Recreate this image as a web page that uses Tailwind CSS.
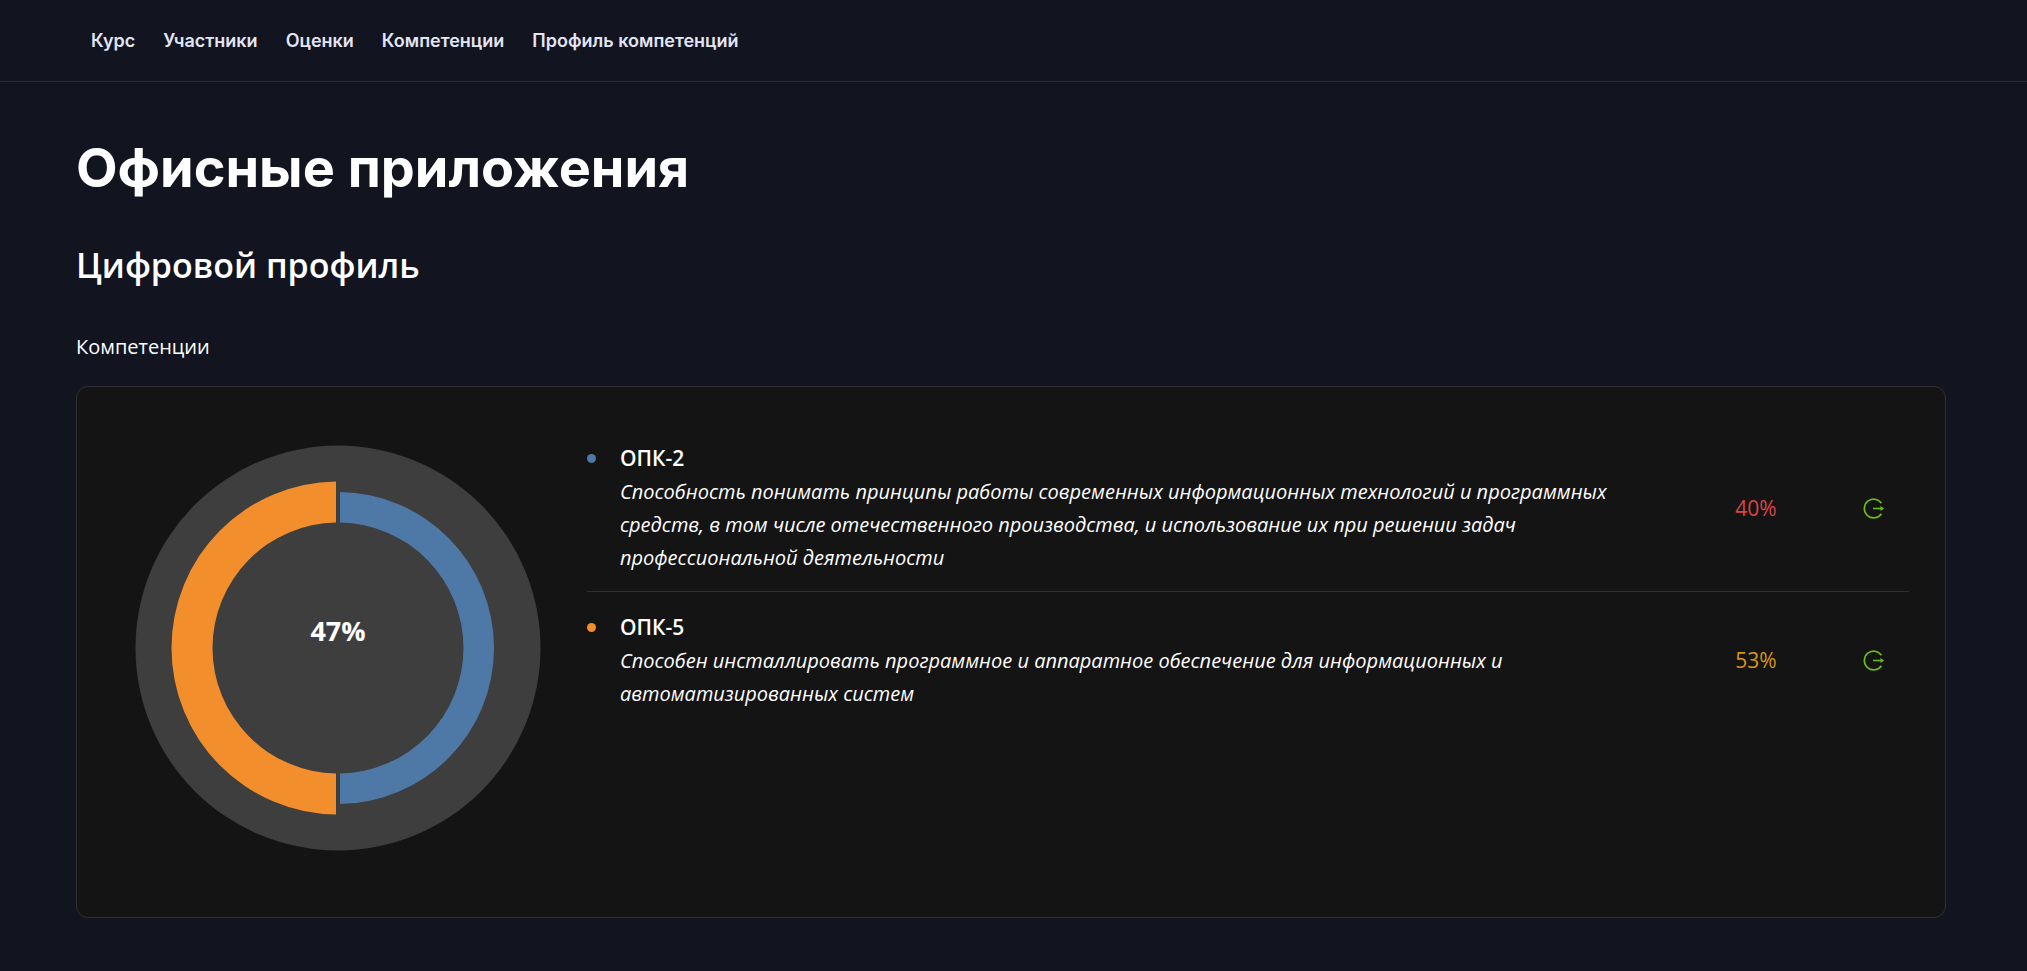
<!DOCTYPE html>
<html lang="ru">
<head>
<meta charset="utf-8">
<meta name="viewport" content="width=device-width, initial-scale=1">
<title>Офисные приложения</title>
<script src="https://cdn.jsdelivr.net/npm/@tailwindcss/browser@4"></script>
</head>
<body class="min-h-screen bg-[#12141f] font-['Open_Sans',sans-serif] text-[20px] leading-[33px] text-white">
<header class="border-b border-[#2b2c38] px-[77px]">
  <nav class="flex h-[81px] items-center font-['Inter',sans-serif] text-[18px] font-semibold text-[#e3e5f5]">
    <a href="#" class="px-3.5">Курс</a>
    <a href="#" class="px-3.5">Участники</a>
    <a href="#" class="px-3.5">Оценки</a>
    <a href="#" class="px-3.5">Компетенции</a>
    <a href="#" class="px-3.5">Профиль компетенций</a>
  </nav>
</header>
<main class="pt-[50px] pr-[81px] pb-[53px] pl-[76px]">
  <h1 class="font-['Inter',sans-serif] text-[54px] leading-[72px] font-bold">Офисные приложения</h1>
  <h2 class="mt-9 text-[34px] leading-[50px] font-semibold">Цифровой профиль</h2>
  <p class="mt-10">Компетенции</p>
  <section class="mt-[23px] flex gap-6 rounded-xl border border-[#303030] bg-[#141414] p-9">
    <div class="h-[458px] w-[450px] shrink-0">
      <svg class="block size-[450px]" viewBox="-225 -225 450 450" role="img" aria-label="Средний результат 47%">
        <circle r="202.5" fill="#3e3e3e"/>
        <path d="M2 -155.987A156 156 0 0 1 2 155.987V125.484A125.5 125.5 0 0 0 2 -125.484Z" fill="#4e79a7"/>
        <path d="M-2 -166.488A166.5 166.5 0 0 0 -2 166.488V125.484A125.5 125.5 0 0 1 -2 -125.484Z" fill="#f28e2c"/>
        <text x="0" y="-7" text-anchor="middle" fill="#fff" class="text-[27px] font-bold">47%</text>
      </svg>
    </div>
    <ul class="min-w-0 flex-1">
      <li class="flex items-center border-b border-[#303030] pt-[19px] pb-[17px]">
        <div class="flex flex-1 gap-6">
          <span class="mt-3 size-[9px] shrink-0 rounded-full bg-[#4e79a7]"></span>
          <div>
            <h3 class="text-[21px] font-semibold">ОПК-2</h3>
            <p class="italic">Способность понимать принципы работы современных информационных технологий и программных средств, в том числе отечественного производства, и использование их при решении задач профессиональной деятельности</p>
          </div>
        </div>
        <span class="ml-[84px] w-[60px] shrink-0 text-center text-[21px] text-[#dc4446]">40%</span>
        <button type="button" aria-label="Перейти к ОПК-2" class="ml-[52px] shrink-0 px-6 py-1 text-[#6abe12]">
          <svg class="size-[23px]" viewBox="0 0 23 23" fill="none" stroke="currentColor" stroke-width="1.6"><path d="M19.5 6.2A9.4 9.4 0 1 0 19.5 16.8M11 11.5H20"/><path d="M18.5 8.9L22.2 11.5L18.5 14.1Z" fill="currentColor" stroke="none"/></svg>
        </button>
      </li>
      <li class="flex items-center pt-[19px] pb-[17px]">
        <div class="flex flex-1 gap-6">
          <span class="mt-3 size-[9px] shrink-0 rounded-full bg-[#f28e2c]"></span>
          <div>
            <h3 class="text-[21px] font-semibold">ОПК-5</h3>
            <p class="italic">Способен инсталлировать программное и аппаратное обеспечение для информационных и автоматизированных систем</p>
          </div>
        </div>
        <span class="ml-[84px] w-[60px] shrink-0 text-center text-[21px] text-[#d89614]">53%</span>
        <button type="button" aria-label="Перейти к ОПК-5" class="ml-[52px] shrink-0 px-6 py-1 text-[#6abe12]">
          <svg class="size-[23px]" viewBox="0 0 23 23" fill="none" stroke="currentColor" stroke-width="1.6"><path d="M19.5 6.2A9.4 9.4 0 1 0 19.5 16.8M11 11.5H20"/><path d="M18.5 8.9L22.2 11.5L18.5 14.1Z" fill="currentColor" stroke="none"/></svg>
        </button>
      </li>
    </ul>
  </section>
</main>
</body>
</html>
